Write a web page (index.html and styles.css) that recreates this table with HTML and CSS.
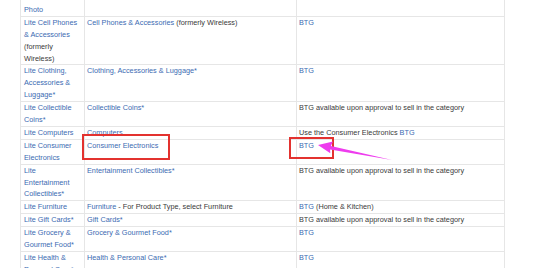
FILE: index.html
```html
<!DOCTYPE html>
<html>
<head>
<meta charset="utf-8">
<link rel="stylesheet" href="styles.css">
</head>
<body>
<div class="page">
  <table class="cats">
    <colgroup><col class="c1"><col class="c2"><col class="c3"></colgroup>
    <tr class="lead"><td><a>Photo</a></td><td></td><td></td></tr>
    <tr><td><a>Lite Cell Phones &amp; Accessories</a> (formerly Wireless)</td><td><a>Cell Phones &amp; Accessories</a> (formerly Wireless)</td><td><a>BTG</a></td></tr>
    <tr><td><a>Lite Clothing, Accessories &amp; Luggage*</a></td><td><a>Clothing, Accessories &amp; Luggage*</a></td><td><a>BTG</a></td></tr>
    <tr><td><a>Lite Collectible Coins*</a></td><td><a>Collectible Coins*</a></td><td>BTG available upon approval to sell in the category</td></tr>
    <tr><td><a>Lite Computers</a></td><td><a>Computers</a></td><td>Use the Consumer Electronics <a>BTG</a></td></tr>
    <tr><td><a>Lite Consumer Electronics</a></td><td><a>Consumer Electronics</a></td><td><a>BTG</a></td></tr>
    <tr><td><a>Lite Entertainment Collectibles*</a></td><td><a>Entertainment Collectibles*</a></td><td>BTG available upon approval to sell in the category</td></tr>
    <tr><td><a>Lite Furniture</a></td><td><a>Furniture</a> - For Product Type, select Furniture</td><td><a>BTG</a> (Home &amp; Kitchen)</td></tr>
    <tr><td><a>Lite Gift Cards*</a></td><td><a>Gift Cards*</a></td><td>BTG available upon approval to sell in the category</td></tr>
    <tr><td><a>Lite Grocery &amp; Gourmet Food*</a></td><td><a>Grocery &amp; Gourmet Food*</a></td><td><a>BTG</a></td></tr>
    <tr><td><a>Lite Health &amp; Personal Care*</a></td><td><a>Health &amp; Personal Care*</a></td><td><a>BTG</a></td></tr>
  </table>
  <div class="mark mark-a"></div>
  <div class="mark mark-b"></div>
  <svg class="arrow" width="554" height="268" viewBox="0 0 554 268">
    <polygon points="318,145 333,141.5 330.9,145.9 392,160 330.1,149.4 330.3,153.2" fill="#ee3cee"/>
  </svg>
</div>
</body>
</html>
```

FILE: styles.css
```css
html, body {
  margin: 0;
  padding: 0;
  background: #ffffff;
}
.page {
  position: relative;
  width: 554px;
  height: 268px;
  overflow: hidden;
}
.cats {
  margin: -9px 0 0 20px;
  width: 484px;
  table-layout: fixed;
  border-collapse: collapse;
  font-family: "Liberation Sans", Arial, sans-serif;
  font-size: 7.3px;
  line-height: 11.9px;
  color: #3a3a3a;
}
.c1 { width: 64px; }
.c2 { width: 212px; }
.c3 { width: 208px; }
.cats td {
  border: 1px solid #e6e6e6;
  padding: 0 2px 0 2px;
  vertical-align: top;
}
.cats td:first-child {
  padding-left: 3px;
}
.cats .lead td {
  padding-top: 11.9px;
}
.cats a {
  color: #3b6bb2;
  text-decoration: none;
}
.mark {
  position: absolute;
  border: 2px solid #e3322f;
  box-sizing: border-box;
}
.mark-a {
  left: 82px;
  top: 134px;
  width: 88px;
  height: 26px;
}
.mark-b {
  left: 289px;
  top: 137px;
  width: 45px;
  height: 22px;
}
.arrow {
  position: absolute;
  left: 0;
  top: 0;
}
```
